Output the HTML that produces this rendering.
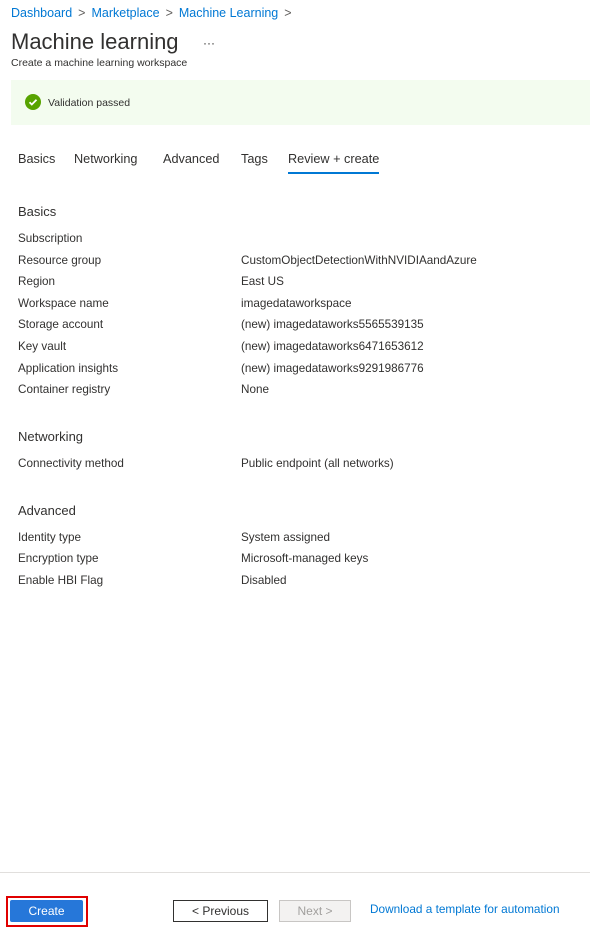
<!DOCTYPE html>
<html><head><style>
body{margin:0;width:590px;height:929px;background:#fff;font-family:"Liberation Sans",sans-serif;color:#323130;position:relative;overflow:hidden}
.a{position:absolute;white-space:nowrap}
.bc{top:6px;left:11px;font-size:12.5px;color:#0078d4}
.bc span{color:#605e5c;margin:0 6px}
.r{font-size:11.7px;line-height:16px}
.h{font-size:13px;line-height:16px;color:#323130}
.tab{font-size:12.7px;top:152px}
</style></head><body>
<div class="a bc">Dashboard<span>&gt;</span>Marketplace<span>&gt;</span>Machine Learning<span>&gt;</span></div>
<div class="a" style="top:29px;left:11px;font-size:22px;color:#323130">Machine learning</div>
<div class="a" style="top:36px;left:203px;font-size:12px;color:#323130">···</div>
<div class="a" style="top:57px;left:11px;font-size:10.5px;color:#323130">Create a machine learning workspace</div>
<div class="a" style="top:80px;left:11px;width:579px;height:45px;background:#f3fcef"></div>
<svg class="a" style="top:94px;left:25px" width="16" height="16" viewBox="0 0 16 16"><circle cx="8" cy="8" r="8" fill="#57a300"/><path d="M4.5 8.2l2.3 2.3 4.7-4.8" stroke="#fff" stroke-width="1.8" fill="none"/></svg>
<div class="a" style="top:97px;left:48px;font-size:10.5px">Validation passed</div>
<div class="a tab" style="left:18px">Basics</div>
<div class="a tab" style="left:74px">Networking</div>
<div class="a tab" style="left:163px">Advanced</div>
<div class="a tab" style="left:241px">Tags</div>
<div class="a tab" style="left:288px">Review + create</div>
<div class="a" style="top:172px;left:288px;width:91px;height:2px;background:#0078d4"></div>

<div class="a h" style="top:204px;left:18px">Basics</div>
<div class="a r" style="top:231px;left:18px">Subscription</div>
<div class="a r" style="top:253px;left:18px">Resource group</div><div class="a r" style="top:253px;left:241px">CustomObjectDetectionWithNVIDIAandAzure</div>
<div class="a r" style="top:274px;left:18px">Region</div><div class="a r" style="top:274px;left:241px">East US</div>
<div class="a r" style="top:296px;left:18px">Workspace name</div><div class="a r" style="top:296px;left:241px">imagedataworkspace</div>
<div class="a r" style="top:317px;left:18px">Storage account</div><div class="a r" style="top:317px;left:241px">(new) imagedataworks5565539135</div>
<div class="a r" style="top:339px;left:18px">Key vault</div><div class="a r" style="top:339px;left:241px">(new) imagedataworks6471653612</div>
<div class="a r" style="top:361px;left:18px">Application insights</div><div class="a r" style="top:361px;left:241px">(new) imagedataworks9291986776</div>
<div class="a r" style="top:382px;left:18px">Container registry</div><div class="a r" style="top:382px;left:241px">None</div>

<div class="a h" style="top:429px;left:18px">Networking</div>
<div class="a r" style="top:456px;left:18px">Connectivity method</div><div class="a r" style="top:456px;left:241px">Public endpoint (all networks)</div>

<div class="a h" style="top:503px;left:18px">Advanced</div>
<div class="a r" style="top:530px;left:18px">Identity type</div><div class="a r" style="top:530px;left:241px">System assigned</div>
<div class="a r" style="top:551px;left:18px">Encryption type</div><div class="a r" style="top:551px;left:241px">Microsoft-managed keys</div>
<div class="a r" style="top:573px;left:18px">Enable HBI Flag</div><div class="a r" style="top:573px;left:241px">Disabled</div>

<div class="a" style="top:872px;left:0;width:590px;height:1px;background:#e1dfdd"></div>
<div class="a" style="top:896px;left:6px;width:78px;height:27px;border:2px solid #e00000"></div>
<div class="a" style="top:900px;left:10px;width:73px;height:22px;background:#2677d9;border-radius:2px;color:#fff;font-size:12px;line-height:22px;text-align:center">Create</div>
<div class="a" style="top:900px;left:173px;width:93px;height:20px;border:1px solid #323130;font-size:12px;line-height:20px;text-align:center">&lt; Previous</div>
<div class="a" style="top:900px;left:279px;width:70px;height:20px;border:1px solid #c8c6c4;background:#f3f2f1;color:#a19f9d;font-size:12px;line-height:20px;text-align:center">Next &gt;</div>
<div class="a" style="top:902px;left:370px;font-size:11.8px;color:#0078d4">Download a template for automation</div>
</body></html>
